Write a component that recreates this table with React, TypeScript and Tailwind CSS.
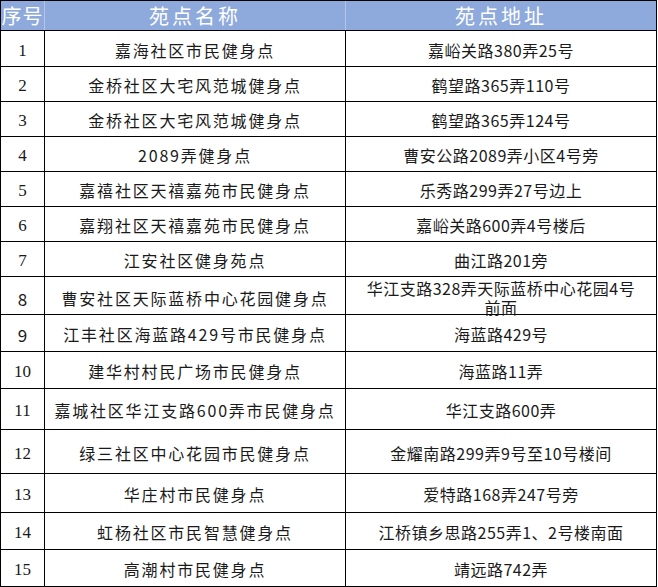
import React from "react";

type Row = {
  no: string;
  name: string;
  addr: React.ReactNode;
  h: string;
  sansNo?: boolean;
};

const rows: Row[] = [
  { no: "1", name: "嘉海社区市民健身点", addr: "嘉峪关路380弄25号", h: "h-[36px]" },
  { no: "2", name: "金桥社区大宅风范城健身点", addr: "鹤望路365弄110号", h: "h-[35px]" },
  { no: "3", name: "金桥社区大宅风范城健身点", addr: "鹤望路365弄124号", h: "h-[35px]" },
  { no: "4", name: "2089弄健身点", addr: "曹安公路2089弄小区4号旁", h: "h-[35px]" },
  { no: "5", name: "嘉禧社区天禧嘉苑市民健身点", addr: "乐秀路299弄27号边上", h: "h-[35px]" },
  { no: "6", name: "嘉翔社区天禧嘉苑市民健身点", addr: "嘉峪关路600弄4号楼后", h: "h-[35px]" },
  { no: "7", name: "江安社区健身苑点", addr: "曲江路201旁", h: "h-[35px]" },
  {
    no: "8",
    name: "曹安社区天际蓝桥中心花园健身点",
    addr: (
      <>
        <span className="block leading-[19px]">华江支路328弄天际蓝桥中心花园4号</span>
        <span className="block leading-[19px]">前面</span>
      </>
    ),
    h: "h-[38px]",
    sansNo: true,
  },
  { no: "9", name: "江丰社区海蓝路429号市民健身点", addr: "海蓝路429号", h: "h-[37px]", sansNo: true },
  { no: "10", name: "建华村村民广场市民健身点", addr: "海蓝路11弄", h: "h-[37px]" },
  { no: "11", name: "嘉城社区华江支路600弄市民健身点", addr: "华江支路600弄", h: "h-[41px]" },
  { no: "12", name: "绿三社区中心花园市民健身点", addr: "金耀南路299弄9号至10号楼间", h: "h-[44px]" },
  { no: "13", name: "华庄村市民健身点", addr: "爱特路168弄247号旁", h: "h-[39px]" },
  { no: "14", name: "虹杨社区市民智慧健身点", addr: "江桥镇乡思路255弄1、2号楼南面", h: "h-[37px]" },
  { no: "15", name: "高潮村市民健身点", addr: "靖远路742弄", h: "h-[37px]" },
];

const cjk = "font-['Noto_Sans_CJK_SC','Noto_Sans',sans-serif]";
const serif = "font-['Liberation_Serif','Noto_Sans_CJK_SC',serif]";

export default function App(): React.ReactNode {
  return (
    <div className="w-[658px] h-[587px] bg-white overflow-hidden">
      <div className="w-[657px] border-l border-t border-black">
        {/* header */}
        <div className="grid grid-cols-[44px_301px_311px] h-[30px] bg-[#8ea9db] border-b border-black text-white">
          <div className={`${cjk} flex items-center justify-center border-r border-[#b4c6e7] text-[20px] tracking-[1px] leading-none`}>
            序号
          </div>
          <div className={`${cjk} flex items-center justify-center border-r border-[#b4c6e7] text-[20px] tracking-[3px] leading-none`}>
            苑点名称
          </div>
          <div className={`${cjk} flex items-center justify-center border-r border-black text-[20px] tracking-[3px] leading-none`}>
            苑点地址
          </div>
        </div>

        {rows.map((r) => (
          <div
            key={r.no}
            className={`grid grid-cols-[44px_301px_311px] border-b border-black text-[#1a1a1a] ${r.h}`}
          >
            <div
              className={`${r.sansNo ? cjk : serif} flex items-center justify-center border-r border-black pt-[3px] text-[17px] leading-none`}
            >
              {r.no}
            </div>
            <div
              className={`${cjk} flex items-center justify-center border-r border-black pt-[2px] text-[16px] tracking-[1.8px] leading-none whitespace-nowrap`}
            >
              {r.name}
            </div>
            <div
              className={`${cjk} flex items-center justify-center border-r border-black pt-[2px] text-center text-[16px] tracking-[0.5px] leading-[20px] whitespace-nowrap`}
            >
              <div>{r.addr}</div>
            </div>
          </div>
        ))}
      </div>
    </div>
  );
}
